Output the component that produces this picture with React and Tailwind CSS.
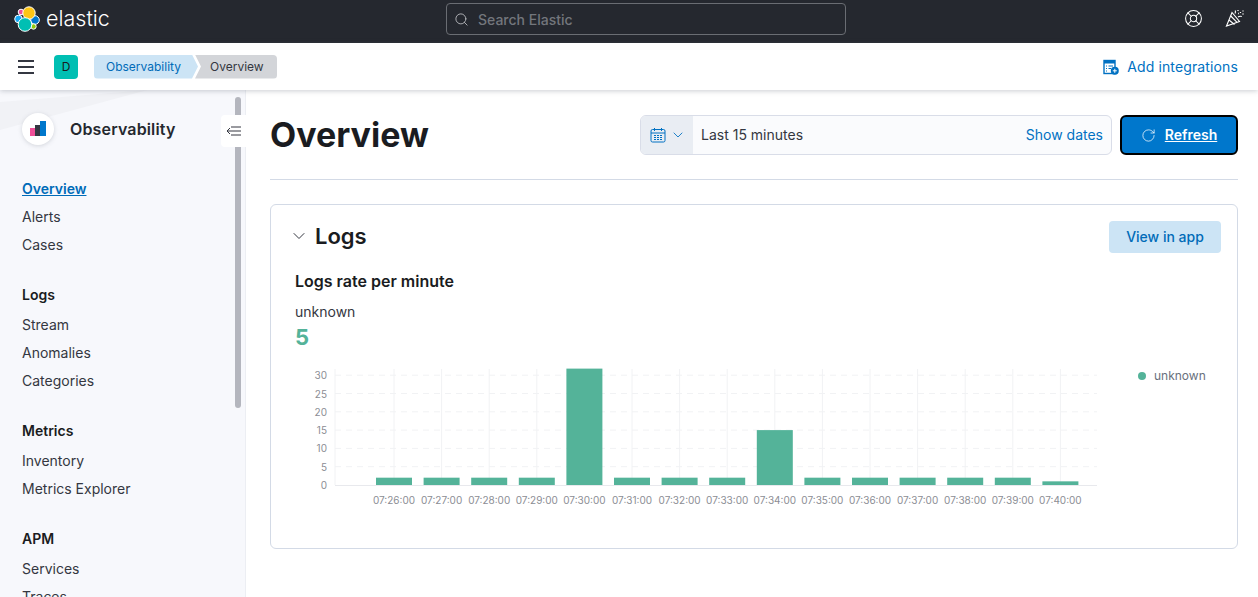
import { RotateCw, ChevronDown, LifeBuoy, Search } from 'lucide-react';

const NAV = [
  { items: ['Overview', 'Alerts', 'Cases'] },
  { title: 'Logs', items: ['Stream', 'Anomalies', 'Categories'] },
  { title: 'Metrics', items: ['Inventory', 'Metrics Explorer'] },
  { title: 'APM', items: ['Services', 'Traces'] },
];

const BARS = [
  ['07:26:00', 2], ['07:27:00', 2], ['07:28:00', 2], ['07:29:00', 2], ['07:30:00', 31.8],
  ['07:31:00', 2], ['07:32:00', 2], ['07:33:00', 2], ['07:34:00', 15], ['07:35:00', 2],
  ['07:36:00', 2], ['07:37:00', 2], ['07:38:00', 2], ['07:39:00', 2], ['07:40:00', 1],
];

const ElasticLogo = () => (
  <svg width="26" height="26" viewBox="0 0 26 26" stroke="#fff" strokeWidth="1">
    <circle cx="4.500" cy="13" r="3.800" fill="#1ba9f5" />
    <circle cx="7" cy="6" r="2.800" fill="#f04e98" />
    <circle cx="21" cy="14" r="4.300" fill="#0077cc" />
    <circle cx="19.500" cy="20.500" r="2.700" fill="#93c90e" />
    <circle cx="15" cy="7" r="6.200" fill="#fec514" />
    <circle cx="11" cy="18.500" r="6.800" fill="#00bfb3" />
  </svg>
);

const PartyIcon = () => (
  <svg width="20" height="20" viewBox="0 0 20 20" fill="none" stroke="#fff" strokeWidth="1.100">
    <path d="M1.500 18L7 4.500l7.500 9z" />
    <path d="M4 12l5.500 4.500M5.800 8l6 6.200" />
    <path d="M10 5.500c.6-1 .6-2 .2-3M13 9c1.200-.9 2.500-1 3.800-.5" />
    <path d="M13 2v1M15.500 4v1M18 2.500v1M17.500 6h1M13 5.500h.8" strokeWidth="1.300" />
  </svg>
);

const Chart = () => {
  const y0 = 130;
  const unit = 3.66;
  const x = (i) => 100 + i * 47.6;
  return (
    <svg width="810" height="152" className="block">
      {[0, 5, 10, 15, 20, 25, 30].map((v) => (
        <g key={v}>
          {v > 0 && <line x1="41" x2="803" y1={y0 - v * unit} y2={y0 - v * unit} stroke="#f1f2f4" strokeDasharray="6 5" />}
          <text x="33" y={y0 - v * unit + 4} textAnchor="end" fontSize="10" fill="#8b8d94">{v}</text>
        </g>
      ))}
      <line x1="41" x2="41" y1="14" y2={y0} stroke="#f1f2f4" />
      <line x1="41" x2="803" y1={y0 + 0.5} y2={y0 + 0.5} stroke="#e8e9ed" />
      {BARS.map(([label, value], i) => (
        <g key={label}>
          <line x1={x(i)} x2={x(i)} y1="14" y2={y0} stroke="#f1f2f4" />
          <rect x={x(i) - 18} y={y0 - value * unit} width="36" height={value * unit} fill="#54b399" />
          <text x={x(i)} y={y0 + 19} textAnchor="middle" fontSize="10" fill="#8b8d94">{label}</text>
        </g>
      ))}
    </svg>
  );
};

export default function App() {
  return (
    <div className="h-[597px] w-[1258px] overflow-hidden flex flex-col bg-white text-[#1a1c21] font-['Inter',sans-serif]">
      {/* top bar */}
      <header className="h-[43px] flex-none bg-[#25282f] flex items-center justify-between pl-[14px] pr-[13px] pb-[5px] relative">
        <div className="flex items-center gap-[6px]">
          <ElasticLogo />
          <span className="text-white text-[21.5px] font-light leading-none pb-[1px]">elastic</span>
        </div>
        <div className="absolute left-[446px] top-[3px] w-[400px] h-[32px] border border-[#6a6d73] rounded-[4px] flex items-center pl-[7px] gap-[9px]">
          <Search size={15} strokeWidth={1.3} className="text-[#c8c9cc]" />
          <span className="text-[14px] text-[#73767c] font-medium">Search Elastic</span>
        </div>
        <div className="flex items-center gap-[22px] pb-[2px]">
          <LifeBuoy size={19} strokeWidth={1.3} className="text-white" />
          <PartyIcon />
        </div>
      </header>

      {/* breadcrumb bar */}
      <div className="h-[47px] flex-none bg-white flex items-center pl-[18px] pr-[20px] shadow-[0_1px_5px_rgba(105,112,125,0.35)] z-10 relative">
        <div className="flex flex-col gap-[4px] w-[16px]">
          <span className="h-[2px] bg-[#343741]" />
          <span className="h-[2px] bg-[#343741]" />
          <span className="h-[2px] bg-[#343741]" />
        </div>
        <div className="ml-[20px] w-[24px] h-[24px] rounded-[4px] bg-[#00bfb3] flex items-center justify-center text-[12px] text-[#1a1c21]">D</div>
        <div className="ml-[16px] flex items-center text-[12px]">
          <span className="h-[24px] w-[104px] pl-[12px] bg-[#cce4f5] text-[#006bb8] rounded-l-[4px] flex items-center [clip-path:polygon(0_0,calc(100%-6px)_0,100%_50%,calc(100%-6px)_100%,0_100%)]">Observability</span>
          <span className="h-[24px] w-[82px] -ml-[3px] pl-[15px] bg-[#d3d5d9] text-[#343741] rounded-r-[4px] flex items-center [clip-path:polygon(0_0,100%_0,100%_100%,0_100%,6px_50%)]">Overview</span>
        </div>
        <div className="ml-auto flex items-center gap-[8px] text-[#0071c2] text-[14px] tracking-[0.13px]">
          <svg width="16" height="16" viewBox="0 0 16 16" fill="none">
            <rect x="1" y="1.500" width="11" height="13" fill="none" stroke="#0071c2" strokeWidth="1.400" />
            <rect x="1" y="1.500" width="11" height="3" fill="#0071c2" />
            <path d="M3 7h1M5.500 7H10M3 9.500h1M5.500 9.500H8M3 12h1" stroke="#0071c2" />
            <circle cx="11.800" cy="11.800" r="4" fill="#0071c2" />
            <path d="M11.800 9.800v4M9.800 11.800h4" stroke="#fff" />
          </svg>
          <span>Add integrations</span>
        </div>
      </div>

      <div className="flex-1 min-h-0 flex">
        {/* side nav */}
        <aside className="w-[246px] flex-none relative overflow-hidden bg-[#f7f8fc] shadow-[inset_-1px_0_0_#eceef3] pl-[22px] pt-[21px]">
          <div className="absolute left-0 top-0 w-full h-[40px] bg-[#f1f2f6] [clip-path:polygon(0_30%,60%_0,0_100%)]" />
          <div className="relative flex items-center gap-[16px] h-[36px]">
            <div className="w-[32px] h-[32px] rounded-full bg-white shadow-[0_1px_4px_rgba(105,112,125,0.25)] flex items-center justify-center">
              <svg width="16" height="16" viewBox="0 0 16 16">
                <path d="M0 7h5v8H0z" fill="#f04e98" />
                <path d="M5 4h5v11H5z" fill="#343741" />
                <path d="M10 0h6v15h-6z" fill="#0077cc" />
              </svg>
            </div>
            <span className="text-[16px] font-semibold text-[#25282f] tracking-[0.15px]">Observability</span>
          </div>

          <nav className="mt-[31px] text-[14px] text-[#343741]">
            {NAV.map((group, g) => (
              <div key={g} className="mb-[22px]">
                {group.title && <div className="font-semibold text-[#1a1c21] h-[21px] leading-[21px] mb-[9px]">{group.title}</div>}
                {group.items.map((item) => (
                  <div key={item} className={item === 'Overview' ? 'h-[28px] leading-[21px] text-[#006bb8] font-semibold underline' : 'h-[28px] leading-[21px]'}>{item}</div>
                ))}
              </div>
            ))}
          </nav>

          <div className="absolute left-[235px] top-[7px] w-[6px] h-[311px] rounded-[3px] bg-[#b4b6be]" />
          <div className="absolute right-0 top-[25px] w-[25px] h-[32px] bg-white rounded-l-[4px] flex items-center justify-center">
            <svg width="16" height="12" viewBox="0 0 16 12" fill="none" stroke="#343741">
              <path d="M1 6h14M5 2h10M5 10h10" />
              <path d="M4 3L1 6l3 3" />
            </svg>
          </div>
        </aside>

        {/* main */}
        <main className="flex-1 min-w-0 pl-[24px] pr-[20px] pt-[25px]">
          <div className="h-[65px] border-b border-[#d3dae6] flex items-start justify-between">
            <h1 className="text-[34px] font-bold leading-[40px] text-[#1a1c21]">Overview</h1>
            <div className="flex items-center gap-[8px]">
              <div className="w-[472px] h-[40px] rounded-[6px] border border-[#d9dde8] bg-[#fafbfd] flex items-center text-[14px] overflow-hidden">
                <div className="w-[52px] h-full bg-[#e9edf3] flex items-center pl-[9px] gap-[4px] text-[#0071c2]">
                  <svg width="16" height="16" viewBox="0 0 16 16" fill="none" stroke="#0071c2">
                    <rect x="1" y="2.500" width="14" height="12.500" rx="1.500" />
                    <path d="M1 6h14M4.500 1v3M11.500 1v3" />
                    <path d="M4 8.500h8M4 10.500h8M4 12.500h8" strokeDasharray="2 1" />
                  </svg>
                  <ChevronDown size={16} strokeWidth={1.3} />
                </div>
                <span className="ml-[8px] pb-[2px] text-[#343741]">Last 15 minutes</span>
                <span className="ml-auto mr-[8px] pb-[2px] text-[#0071c2]">Show dates</span>
              </div>
              <button className="w-[118px] h-[40px] rounded-[6px] bg-[#0077cc] border-2 border-black flex items-center justify-center gap-[9px] text-white text-[14px] font-semibold">
                <RotateCw size={15} strokeWidth={1.2} />
                <span className="underline pb-[2px]">Refresh</span>
              </button>
            </div>
          </div>

          <section className="mt-[24px] h-[345px] border border-[#d3dae6] rounded-[6px] pl-[24px] pr-[16px] pt-[16px]">
            <div className="flex items-start justify-between">
              <div className="flex items-center gap-[6px] -ml-[6px] h-[30px]">
                <ChevronDown size={20} strokeWidth={1.2} className="text-[#343741]" />
                <h2 className="text-[22px] font-semibold leading-[30px]">Logs</h2>
              </div>
              <button className="w-[112px] h-[32px] pb-[2px] rounded-[4px] bg-[#cce4f5] text-[#006bb8] text-[14px] font-medium">View in app</button>
            </div>
            <h3 className="mt-[16px] text-[16px] font-semibold leading-[24px]">Logs rate per minute</h3>
            <div className="mt-[9px] text-[14px] leading-[20px] text-[#343741]">unknown</div>
            <div className="text-[22px] font-bold leading-[30px] text-[#54b399]">5</div>
            <div className="flex items-start -ml-[1px] mt-[3px]">
              <Chart />
              <div className="ml-[34px] mt-[12px] flex items-center gap-[8px] text-[12px] text-[#69707d]">
                <span className="w-[8px] h-[8px] rounded-full bg-[#54b399]" />
                unknown
              </div>
            </div>
          </section>
        </main>
      </div>
    </div>
  );
}
